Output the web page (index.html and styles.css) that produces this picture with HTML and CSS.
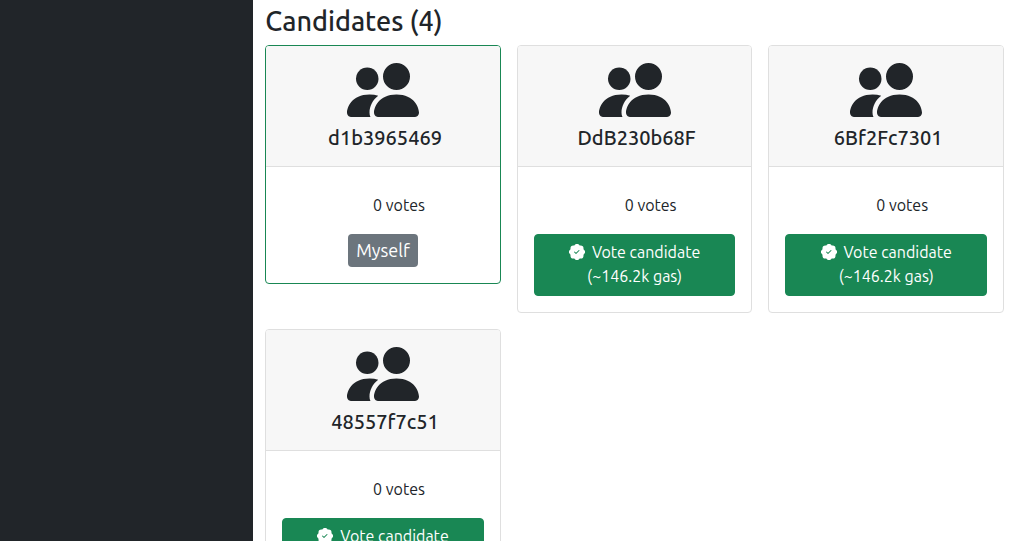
FILE: index.html
```html
<!DOCTYPE html>
<html lang="en">
<head>
<meta charset="utf-8">
<meta name="viewport" content="width=device-width, initial-scale=1">
<title>Candidates</title>
<link rel="stylesheet" href="styles.css">
</head>
<body>
<svg class="sprite" aria-hidden="true">
  <symbol id="people" viewBox="0 0 16 16">
    <path d="M7 14s-1 0-1-1 1-4 5-4 5 3 5 4-1 1-1 1H7zm4-6a3 3 0 1 0 0-6 3 3 0 0 0 0 6z"/>
    <path d="M5.216 14A2.238 2.238 0 0 1 5 13c0-1.355.68-2.75 1.936-3.72A6.325 6.325 0 0 0 5 9c-4 0-5 3-5 4s1 1 1 1h4.216z"/>
    <path d="M4.5 8a2.5 2.5 0 1 0 0-5 2.5 2.5 0 0 0 0 5z"/>
  </symbol>
  <symbol id="patch-check" viewBox="0 0 16 16">
    <path d="M10.067.87a2.89 2.89 0 0 0-4.134 0l-.622.638-.89-.011a2.89 2.89 0 0 0-2.924 2.924l.01.89-.636.622a2.89 2.89 0 0 0 0 4.134l.637.622-.011.89a2.89 2.89 0 0 0 2.924 2.924l.89-.01.622.636a2.89 2.89 0 0 0 4.134 0l.622-.637.89.011a2.89 2.89 0 0 0 2.924-2.924l-.01-.89.636-.622a2.89 2.89 0 0 0 0-4.134l-.637-.622.011-.89a2.89 2.89 0 0 0-2.924-2.924l-.89.01-.622-.636zm.287 5.984-3 3a.5.5 0 0 1-.708 0l-1.5-1.5a.5.5 0 1 1 .708-.708L7 8.793l2.646-2.647a.5.5 0 0 1 .708.708z"/>
  </symbol>
</svg>
<div class="layout">
  <aside class="sidebar"></aside>
  <main class="content">
    <h2 class="heading">Candidates (4)</h2>
    <div class="cards">
      <article class="card card-own">
        <header class="card-header">
          <svg class="avatar" aria-hidden="true"><use href="#people"/></svg>
          <h3 class="name">d1b3965469</h3>
        </header>
        <div class="card-body">
          <p class="votes">0 votes</p>
          <span class="badge">Myself</span>
        </div>
      </article>
      <article class="card">
        <header class="card-header">
          <svg class="avatar" aria-hidden="true"><use href="#people"/></svg>
          <h3 class="name">DdB230b68F</h3>
        </header>
        <div class="card-body">
          <p class="votes">0 votes</p>
          <button class="vote" type="button"><span class="vote-label"><svg class="check" aria-hidden="true"><use href="#patch-check"/></svg>Vote candidate</span><span>(~146.2k gas)</span></button>
        </div>
      </article>
      <article class="card">
        <header class="card-header">
          <svg class="avatar" aria-hidden="true"><use href="#people"/></svg>
          <h3 class="name">6Bf2Fc7301</h3>
        </header>
        <div class="card-body">
          <p class="votes">0 votes</p>
          <button class="vote" type="button"><span class="vote-label"><svg class="check" aria-hidden="true"><use href="#patch-check"/></svg>Vote candidate</span><span>(~146.2k gas)</span></button>
        </div>
      </article>
      <article class="card">
        <header class="card-header">
          <svg class="avatar" aria-hidden="true"><use href="#people"/></svg>
          <h3 class="name">48557f7c51</h3>
        </header>
        <div class="card-body">
          <p class="votes">0 votes</p>
          <button class="vote" type="button"><span class="vote-label"><svg class="check" aria-hidden="true"><use href="#patch-check"/></svg>Vote candidate</span><span>(~146.2k gas)</span></button>
        </div>
      </article>
    </div>
  </main>
</div>
</body>
</html>
```
FILE: styles.css
```css
*, *::before, *::after { box-sizing: border-box; }

body {
  margin: 0;
  color: #212529;
  background: #fff;
  font: 400 16px/24px Ubuntu, "Noto Sans", sans-serif;
}

.sprite { display: none; }

.layout {
  display: grid;
  grid-template-columns: 1fr 3fr;
  height: 100vh;
  overflow: hidden;
}

.sidebar { background: #212529; }

.content { padding: 4px 9px 16px 12px; }

.heading {
  margin: 0 0 7px;
  font-size: 27px;
  font-weight: 500;
  line-height: 34px;
}

.cards {
  display: grid;
  grid-template-columns: repeat(3, 1fr);
  align-items: start;
  gap: 16px;
}

.card {
  overflow: hidden;
  border: 1px solid #dfdfdf;
  border-radius: 4px;
  text-align: center;
}

.card-own { border-color: #198754; }

.card-header {
  padding: 8px 16px;
  background: #f7f7f7;
  border-bottom: 1px solid #dfdfdf;
}

.avatar {
  display: block;
  width: 72px;
  height: 72px;
  margin: 0 auto;
  fill: currentColor;
}

.name {
  margin: 0 0 8px;
  padding-left: 4px;
  font-size: 20px;
  font-weight: 500;
  line-height: 24px;
}

.card-body { padding: 16px; }

.votes {
  margin: 0;
  padding: 10px 0 17px 32px;
}

.badge {
  display: block;
  width: fit-content;
  margin: 0 auto;
  padding: 4px 8px;
  color: #fff;
  background: #6c757d;
  border-radius: 4px;
  font-size: 18px;
  line-height: 25px;
}

.vote {
  display: flex;
  flex-direction: column;
  align-items: center;
  width: 100%;
  padding: 5px 12px 7px;
  color: #fff;
  background: #198754;
  border: 1px solid #198754;
  border-radius: 4px;
  font: inherit;
  cursor: pointer;
}

.vote-label {
  display: flex;
  align-items: center;
  gap: 7px;
}

.check {
  width: 16px;
  height: 16px;
  fill: currentColor;
}
```
